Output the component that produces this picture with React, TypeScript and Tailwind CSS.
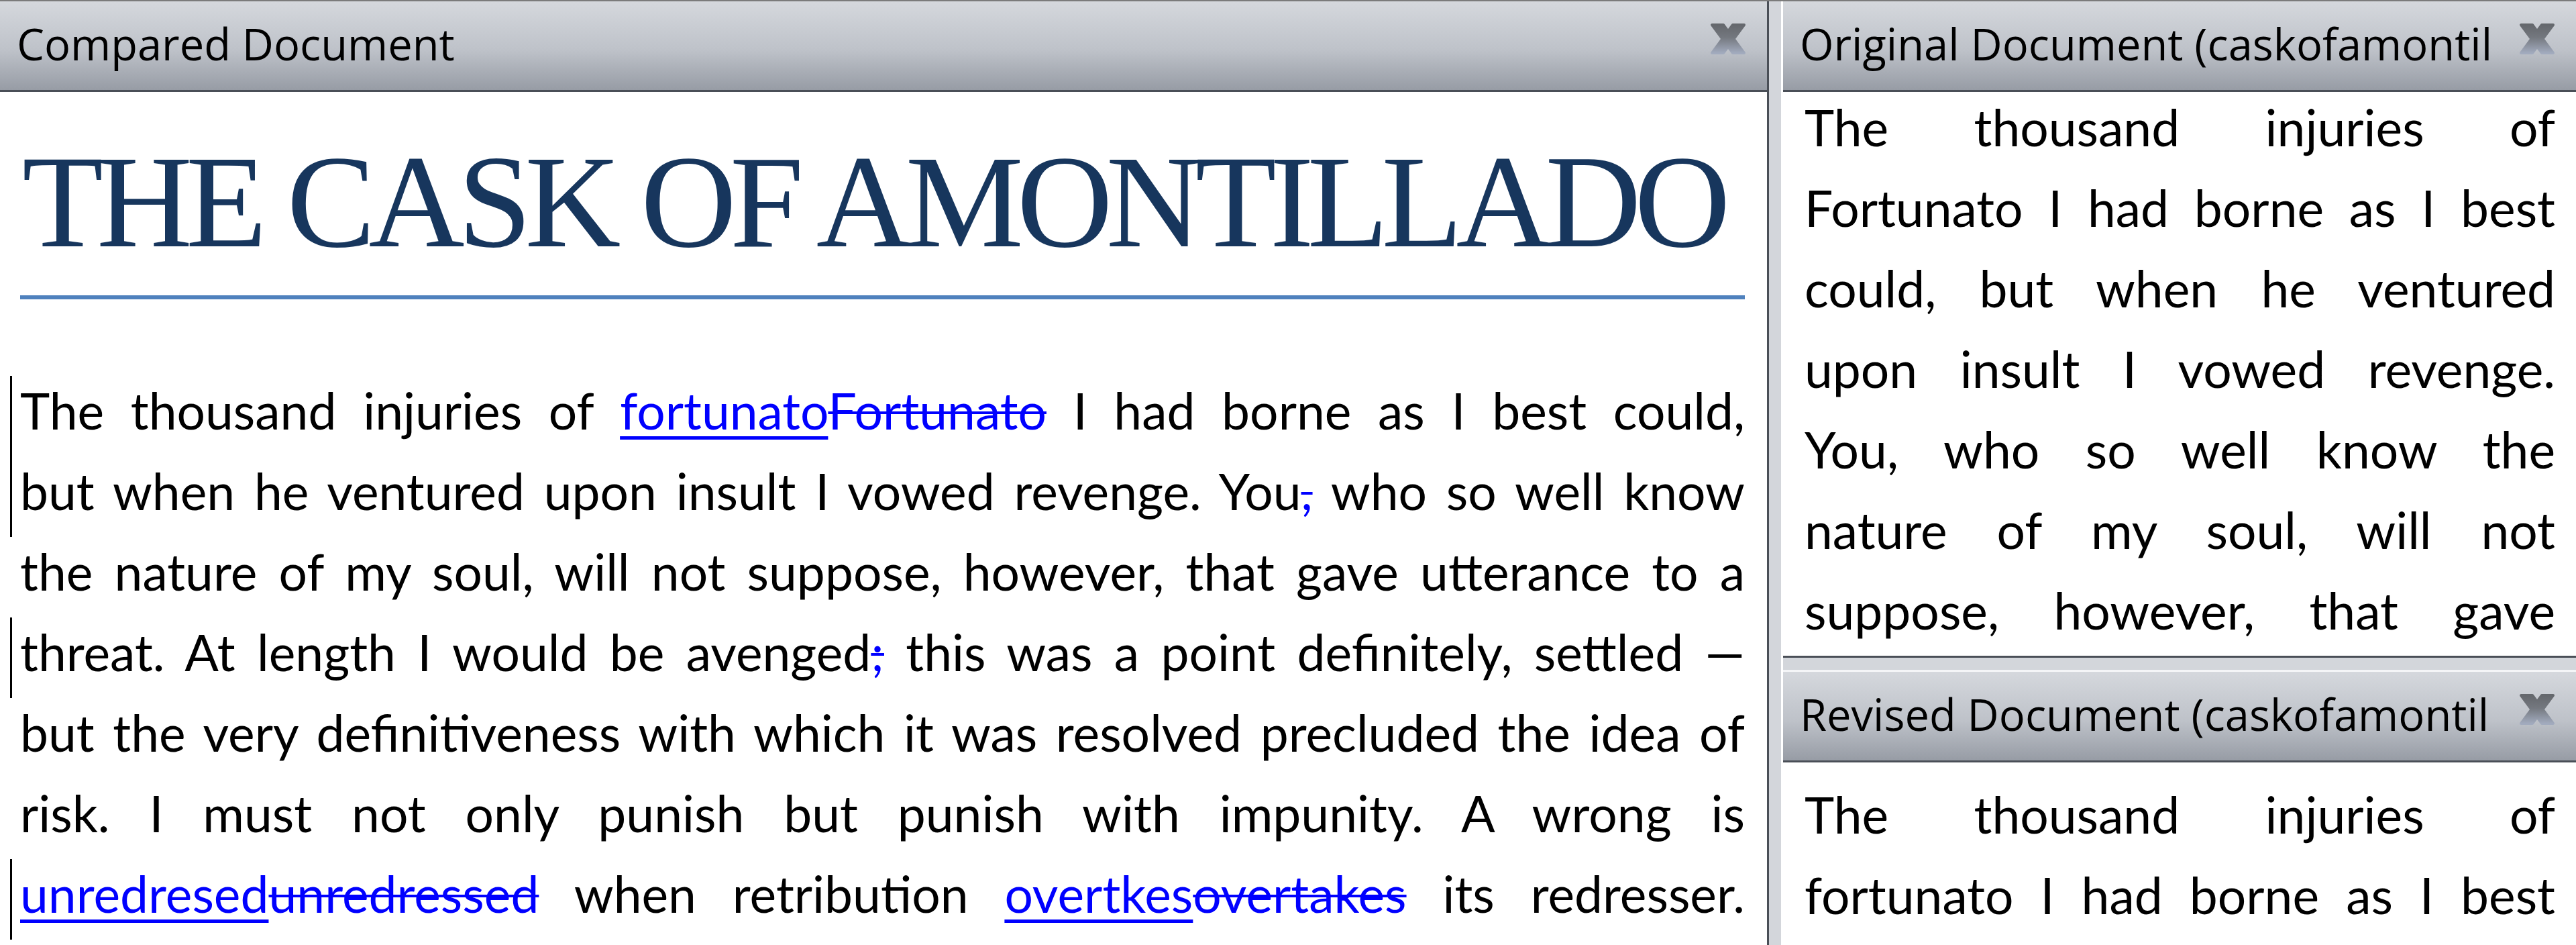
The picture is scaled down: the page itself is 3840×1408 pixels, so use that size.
type Part = string | { ins: string } | { del: string };

type Line = { bar?: boolean; parts: Part[] };

const compared: Line[] = [
  {
    bar: true,
    parts: ['The thousand injuries of ', { ins: 'fortunato' }, { del: 'Fortunato' }, ' I had borne as I best could,'],
  },
  {
    bar: true,
    parts: ['but when he ventured upon insult I vowed revenge. You', { del: ',' }, ' who so well know'],
  },
  { parts: ['the nature of my soul, will not suppose, however, that gave utterance to a'] },
  {
    bar: true,
    parts: ['threat. At length I would be avenged', { del: ';' }, ' this was a point definitely, settled \u2014'],
  },
  { parts: ['but the very definitiveness with which it was resolved precluded the idea of'] },
  { parts: ['risk. I must not only punish but punish with impunity. A wrong is'] },
  {
    bar: true,
    parts: [
      { ins: 'unredresed' },
      { del: 'unredressed' },
      ' when retribution ',
      { ins: 'overtkes' },
      { del: 'overtakes' },
      ' its redresser.',
    ],
  },
];

const original = [
  'The thousand injuries of',
  'Fortunato I had borne as I best',
  'could, but when he ventured',
  'upon insult I vowed revenge.',
  'You, who so well know the',
  'nature of my soul, will not',
  'suppose, however, that gave',
];

const revised = ['The thousand injuries of', 'fortunato I had borne as I best'];

const lineText =
  "h-[120px] leading-[120px] font-['Lato',sans-serif] text-[75px] text-black text-justify [text-align-last:justify] whitespace-nowrap";

function CloseX() {
  return (
    <svg width="56" height="50" viewBox="0 0 56 50" className="shrink-0 mb-[16px]">
      <defs>
        <linearGradient id="xgrad" x1="0" y1="0" x2="0" y2="1">
          <stop offset="0" stopColor="#65686d" />
          <stop offset="0.45" stopColor="#74787f" />
          <stop offset="1" stopColor="#a2abbe" />
        </linearGradient>
      </defs>
      <path d="M4 4 L21 4 L52 46 L35 46 Z" fill="url(#xgrad)" stroke="url(#xgrad)" strokeWidth="4" strokeLinejoin="round" />
      <path d="M35 4 L52 4 L21 46 L4 46 Z" fill="url(#xgrad)" stroke="url(#xgrad)" strokeWidth="4" strokeLinejoin="round" />
    </svg>
  );
}

function PaneHeader({ title }: { title: string }) {
  return (
    <div className="h-[135px] shrink-0 flex items-center pl-[25px] pr-[30px] pb-[4px] border-b-[3px] border-[#4a4f57] bg-linear-to-b from-[#d5d8dd] via-[#bec2c9] via-55% to-[#979ca5]">
      <span className="flex-1 min-w-0 overflow-hidden whitespace-nowrap font-['Open_Sans',sans-serif] text-[65px] text-black">
        {title}
      </span>
      <CloseX />
    </div>
  );
}

function renderPart(p: Part, i: number) {
  if (typeof p === 'string') return <span key={i}>{p}</span>;
  if ('ins' in p)
    return (
      <span key={i} className="text-[#0000ff] underline decoration-[length:5px] underline-offset-[10px]">
        {p.ins}
      </span>
    );
  return (
    <span key={i} className="text-[#0000ff] line-through decoration-[length:4px]">
      {p.del}
    </span>
  );
}

export default function App() {
  return (
    <div className="w-[3840px] h-[1408px] overflow-hidden bg-white border-t-2 border-[#7b7b7b] flex">
      {/* compared document */}
      <div className="w-[2634px] shrink-0 flex flex-col">
        <PaneHeader title="Compared Document" />
        <div className="flex-1 overflow-hidden bg-white pl-[15px] pr-[33px]">
          <div className="ml-[15px] mt-[65px] pl-[3px] pb-[40px] border-b-[6px] border-[#4f81bd]">
            <div className="h-[198px] leading-[198px] font-['Liberation_Serif',serif] text-[198px] tracking-[-10px] text-[#17365d] whitespace-nowrap">
              THE CASK OF AMONTILLADO
            </div>
          </div>
          <div className="mt-[105px]">
            {compared.map((l, i) => (
              <div key={i} className="flex h-[120px]">
                <div className={l.bar ? 'w-[3px] shrink-0 bg-black mt-[9px] -mb-[9px]' : 'w-[3px] shrink-0'} />
                <div className={'ml-[12px] flex-1 min-w-0 ' + lineText}>{l.parts.map(renderPart)}</div>
              </div>
            ))}
          </div>
        </div>
      </div>

      {/* splitter */}
      <div className="w-[24px] shrink-0 bg-[#d3d6db] border-l-[3px] border-[#4a4f57] border-r-[3px] border-r-white" />

      {/* original + revised */}
      <div className="flex-1 flex flex-col min-w-0">
        <PaneHeader title="Original Document (caskofamontil" />
        <div className="h-[840px] shrink-0 overflow-hidden bg-white pl-[32px] pr-[31px]">
          <div className="-mt-[8px]">
            {original.map((t, i) => (
              <div key={i} className={lineText}>
                {t}
              </div>
            ))}
          </div>
        </div>
        <div className="h-[24px] shrink-0 bg-[#d3d6db] border-t-[3px] border-[#4a4f57] border-b-[3px] border-b-[#f4f5f7]" />
        <PaneHeader title="Revised Document (caskofamontil" />
        <div className="flex-1 overflow-hidden bg-white pl-[32px] pr-[31px] pt-[17px]">
          {revised.map((t, i) => (
            <div key={i} className={lineText}>
              {t}
            </div>
          ))}
        </div>
      </div>
    </div>
  );
}
